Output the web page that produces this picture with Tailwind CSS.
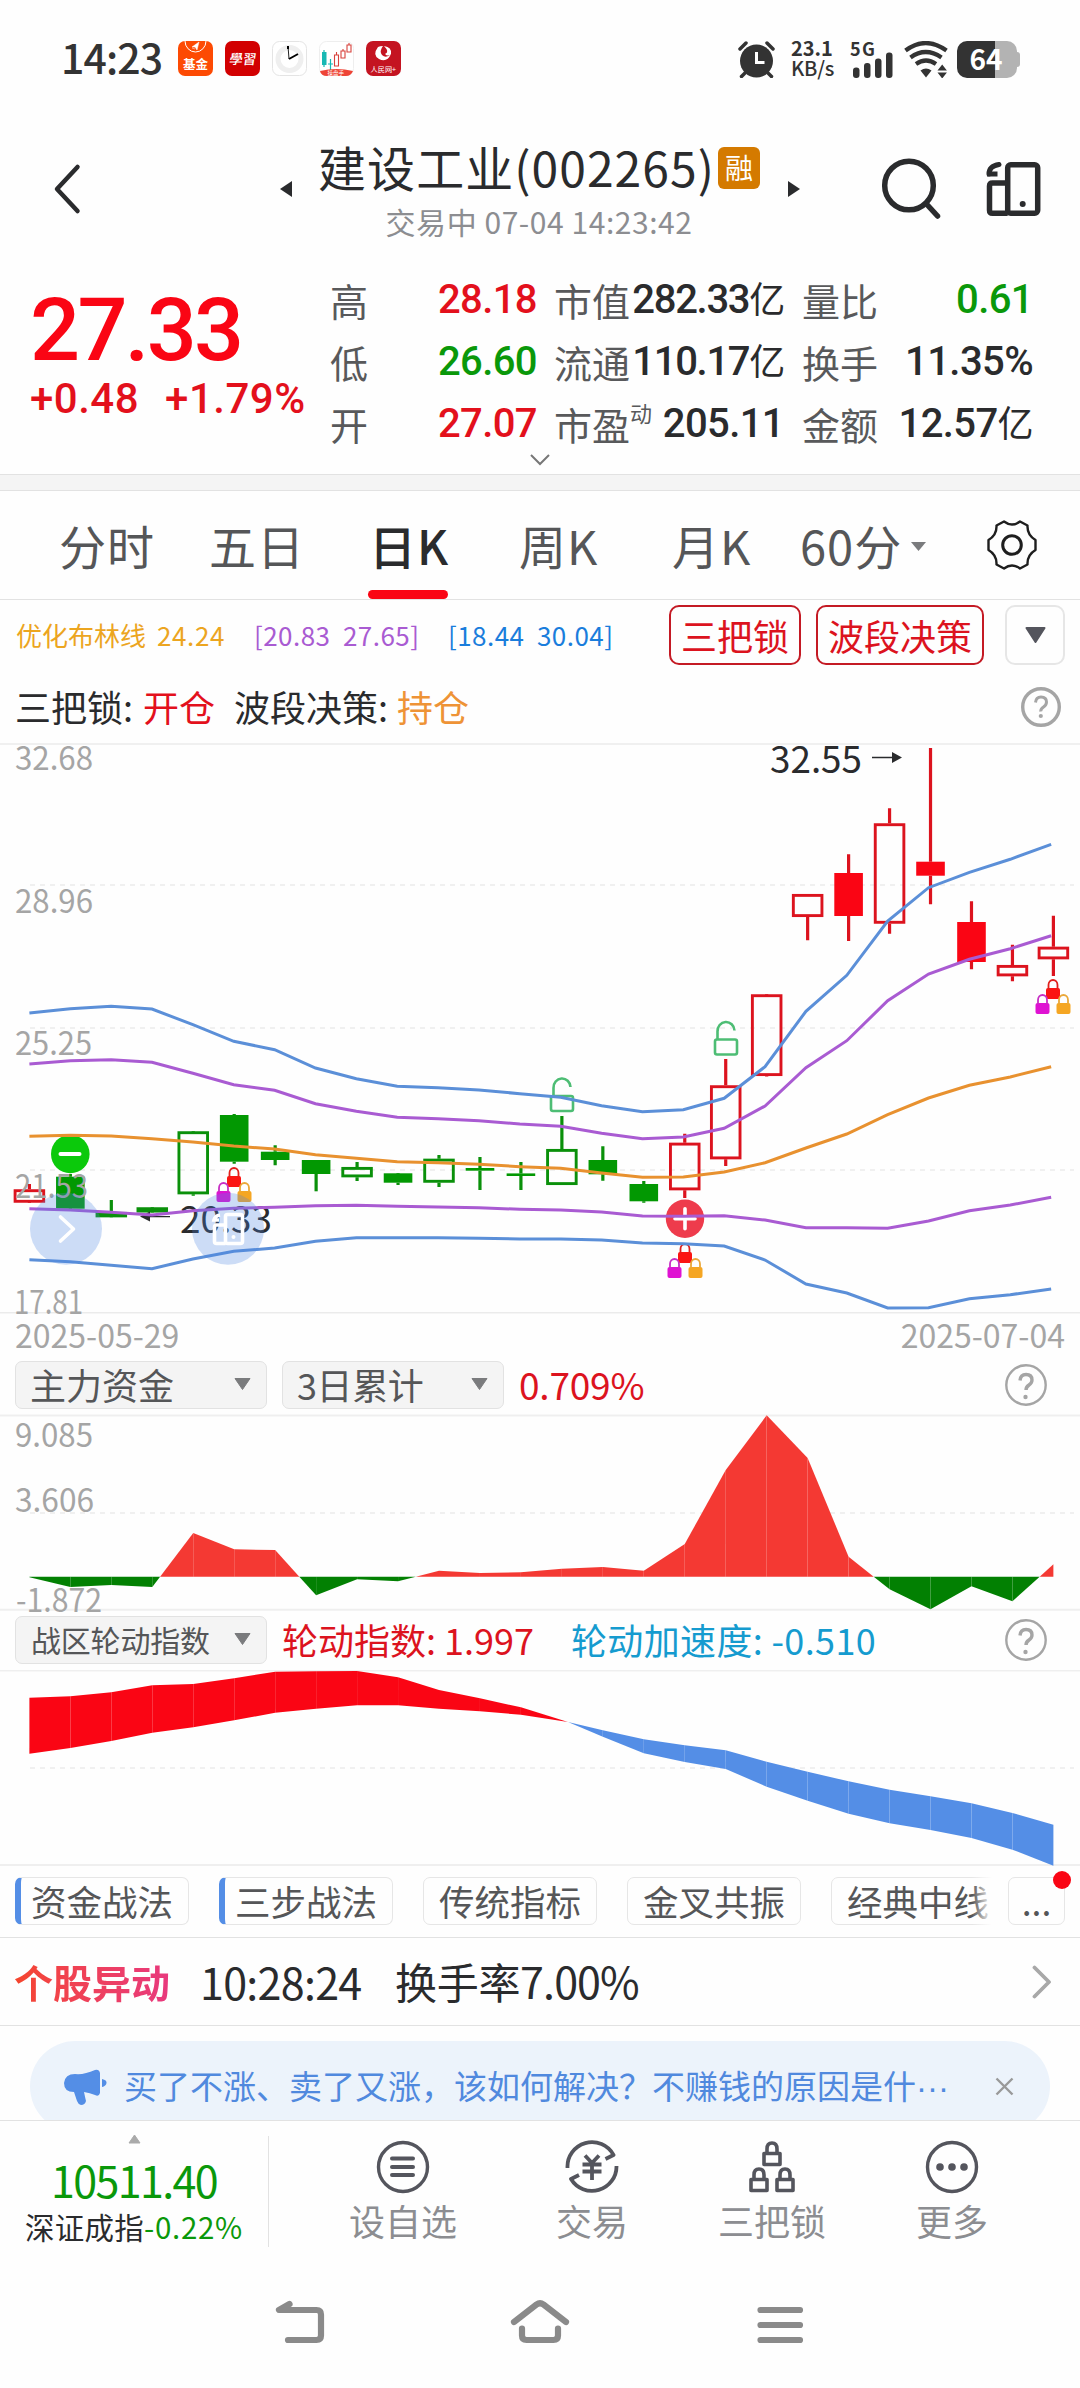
<!DOCTYPE html>
<html lang="zh-CN">
  <head>
    <meta charset="UTF-8" />
    <meta name="viewport" content="width=device-width, initial-scale=1.0" />
    <title>建设工业(002265)</title>
    <script src="https://cdn.jsdelivr.net/npm/@tailwindcss/browser@4"></script>
  </head>

  <body class="w-[1080px] h-[2388px] bg-[#fefefe] overflow-hidden flex flex-col whitespace-nowrap leading-none text-[#2a2b2d] font-['Noto_Sans_CJK_SC',sans-serif]">
    <!-- Status bar -->
    <div class="h-[100px] shrink-0 flex items-start justify-between pl-[61px] pr-[60px] pt-[41px]">
      <div class="flex items-center h-[35px]">
        <span class="w-[117px] text-[41px] font-medium text-[#333] tracking-[-0.900px] leading-[35px] -mt-1">14:23</span>
        <div class="flex gap-[12px]">
          <svg class="w-[35px] h-[35px] rounded-[7px]" viewBox="0 0 35 35">
            <rect width="35" height="35" fill="#fd4a03" />
            <path d="M7 0a10.5 11 0 0 0 21 0" fill="none" stroke="#fff" stroke-width="1" />
            <path d="M14 6l7-5-2 8-2-3zM14 7l3 1" fill="#fff" stroke="#fff" stroke-width=".5" />
            <text x="5" y="27.500" font-size="12.500" font-weight="700" fill="#fff">基金</text>
          </svg>
          <svg class="w-[35px] h-[35px] rounded-[7px]" viewBox="0 0 35 35">
            <rect width="35" height="35" fill="#d20001" />
            <text x="5" y="23" font-size="13.500" font-weight="500" fill="#fff" transform="skewX(-8) translate(2 0)">學習</text>
          </svg>
          <svg class="w-[35px] h-[35px]" viewBox="0 0 35 35">
            <rect x=".5" y=".5" width="34" height="34" rx="7" fill="#fff" stroke="#e4e4e4" />
            <circle cx="17.500" cy="18" r="11.500" fill="none" stroke="#efefef" stroke-width="5" />
            <path d="M17 18l-1-13" stroke="#222" stroke-width="1" />
            <path d="M16 5v3M17 18l9-5" stroke="#000" stroke-width="2" />
          </svg>
          <svg class="w-[35px] h-[35px]" viewBox="0 0 35 35">
            <rect x=".5" y=".5" width="34" height="34" rx="7" fill="#fff" stroke="#eee" />
            <path d="M5 9v17M11.500 18v11M9 23h5" stroke="#17b8b4" stroke-width="1.200" />
            <rect x="3" y="11" width="4.500" height="13" fill="#17b8b4" />
            <path d="M15.500 14h4v11h-4zM22 10h4v7h-4zM28 4h4v7h-4zM17.500 11v3M24 8v2M30 2v2" fill="none" stroke="#d8423c" stroke-width="1.100" />
            <path d="M1 30q16.500-4 33 0q-2 5-7 5H8q-6 0-7-5z" fill="#ee4436" />
            <text x="8.500" y="33.500" font-size="5.500" fill="#fff">操盘手</text>
          </svg>
          <svg class="w-[35px] h-[35px] rounded-[7px]" viewBox="0 0 35 35">
            <rect width="35" height="35" fill="#c41421" />
            <path d="M12 6q-6 8 1 12q8 4 12-5q-5 5-9 1q-3-4 1-9q-3 0-5 1z" fill="#fff" />
            <path d="M18 5q8 1 7 8q-3 3-6 0q5-2-1-8z" fill="#fff" />
            <text x="4.500" y="31" font-size="7.200" fill="#fff">人民网+</text>
          </svg>
        </div>
      </div>
      <div class="flex items-start text-[#333]">
        <svg class="w-[37px] h-[37px]" viewBox="0 0 37 37" fill="none" stroke="#333" stroke-linecap="round">
          <circle cx="18.500" cy="20" r="16.500" fill="#333" stroke="none" />
          <path d="M2 8l6-6M35 8l-6-6" stroke-width="3.500" />
          <path d="M7 32l-3.500 3.500M30 32l3.500 3.500" stroke-width="3.500" />
          <path d="M18.500 11v10.500h8" stroke="#fff" stroke-width="3" stroke-linecap="butt" />
        </svg>
        <div class="ml-[16px] w-[60px] flex flex-col text-[20px] font-bold leading-[20px]">
          <span class="-mt-[3px]">23.1</span>
          <span class="font-medium tracking-[-0.200px]">KB/s</span>
        </div>
        <svg class="w-[44px] h-[37px] overflow-visible" viewBox="0 0 44 37" fill="#333">
          <text x="-1" y="14.500" font-size="18" font-weight="700" textLength="25">5G</text>
          <rect x="2" y="26.500" width="6.500" height="10.500" rx="3" />
          <rect x="13" y="22" width="6.500" height="15" rx="3" />
          <rect x="24" y="17.500" width="6.500" height="19.500" rx="3" />
          <rect x="35" y="11.500" width="6.500" height="25.500" rx="3" />
        </svg>
        <svg class="ml-[9px] w-[44px] h-[37px]" viewBox="0 0 44 37" fill="none" stroke="#333" stroke-width="4.200">
          <path d="M1.500 9.500q20-15 41 0M6.500 16.500q15-11 31 0M12 23q10-7 20 0" />
          <path d="M16.500 29.500q5.500-4 11 0L22 36.500z" fill="#333" stroke="none" />
          <path d="M33.500 29.500l4.700-6 4.700 6zM33.500 31.500l4.700 6 4.700-6z" fill="#333" stroke="none" />
        </svg>
        <svg class="ml-[9px] w-[63px] h-[37px] overflow-visible" viewBox="0 0 63 37">
          <rect x="50" y="11" width="13" height="15" rx="3" fill="#b3b3b3" />
          <path d="M38 0h12a10 10 0 0 1 10 10v17a10 10 0 0 1-10 10H38z" fill="#b3b3b3" />
          <path d="M38 0H10A10 10 0 0 0 0 10v17a10 10 0 0 0 10 10h28z" fill="#333" />
          <text x="12.500" y="28.500" font-size="28" font-weight="700" fill="#fff" textLength="33">64</text>
        </svg>
      </div>
    </div>

    <!-- Title bar -->
    <header class="h-[150px] shrink-0 flex items-start pl-[53px] pr-[38px]">
      <svg class="mt-[62px] w-[30px] h-[54px]" viewBox="0 0 30 54">
        <path d="M24.500 5L4 27l20.500 22" fill="none" stroke="#2a2b2d" stroke-width="4.500" stroke-linecap="round" stroke-linejoin="round" />
      </svg>
      <svg class="mt-[81px] ml-[197px] w-[12px] h-[16px]" viewBox="0 0 12 16"><path d="M0 8L12 0v16z" fill="#2a2b2d" /></svg>
      <div class="ml-[25px] w-[444px] flex flex-col items-center">
        <div class="flex items-start">
          <h1 class="mt-[40px] text-[48px] leading-[52px] tracking-[1.050px]">建设工业(002265)</h1>
          <span class="mt-[47px] ml-[3px] w-[42px] h-[42px] rounded-[6px] bg-[#d47a00] text-white text-[28px] leading-[41px] text-center">融</span>
        </div>
        <p class="mt-[13px] text-[30px] leading-[32px] text-[#8c8d91] tracking-[0.550px]">交易中 07-04 14:23:42</p>
      </div>
      <svg class="mt-[81px] ml-[27px] w-[12px] h-[16px]" viewBox="0 0 12 16"><path d="M12 8L0 0v16z" fill="#2a2b2d" /></svg>
      <svg class="mt-[58px] ml-[81px] w-[62px] h-[62px]" viewBox="0 0 62 62" fill="none" stroke="#2a2b2d" stroke-width="5.500" stroke-linecap="round">
        <circle cx="28" cy="27.500" r="24.300" />
        <path d="M45.500 46l11 12" />
      </svg>
      <svg class="mt-[62px] ml-[43px] w-[56px] h-[54px]" viewBox="0 0 56 54" fill="none" stroke="#2a2b2d" stroke-width="5.500">
        <rect x="21.700" y="2.800" width="30" height="48.400" rx="3" />
        <path d="M21.700 21H6.500q-3 0-3 3v24.200q0 3 3 3h15.200" />
        <circle cx="36.700" cy="42" r="3" fill="#2a2b2d" stroke="none" />
        <path d="M13 2.500Q3 4 3 12" stroke-linecap="round" stroke-width="5" />
        <path d="M1 9.500h10.500v5H1z" fill="#2a2b2d" stroke="none" />
      </svg>
    </header>

    <!-- Quote -->
    <section class="relative h-[224px] shrink-0 flex pt-[19px] font-['Roboto','Noto_Sans_CJK_SC',sans-serif]">
      <div class="w-[330px] pl-[30px] text-[#e3101c]">
        <div class="mt-[20px] text-[88px] leading-[82px] font-medium tracking-[-2.600px] text-[#fa0514]">27.33</div>
        <div class="mt-[4px] flex gap-[26px] text-[42px] leading-[48px] font-medium tracking-[0.500px]">
          <span>+0.48</span>
          <span>+1.79%</span>
        </div>
      </div>
      <div class="w-[207px] text-[40px] leading-[62px] text-[#e3101c]">
        <div class="h-[62px] flex justify-between"><span class="mt-[3px] text-[38px] text-[#58595b]">高</span><span class="font-medium tracking-[-0.600px]">28.18</span></div>
        <div class="h-[62px] flex justify-between"><span class="mt-[3px] text-[38px] text-[#58595b]">低</span><span class="font-medium tracking-[-0.600px] text-[#0a980a]">26.60</span></div>
        <div class="h-[62px] flex justify-between"><span class="mt-[3px] text-[38px] text-[#58595b]">开</span><span class="font-medium tracking-[-0.600px]">27.07</span></div>
      </div>
      <div class="ml-[17px] w-[230px] text-[40px] leading-[62px]">
        <div class="h-[62px] flex justify-between"><span class="mt-[3px] text-[38px] text-[#58595b]">市值</span><span class="font-medium tracking-[-1.300px]">282.33<span class="text-[36px] font-normal">亿</span></span></div>
        <div class="h-[62px] flex justify-between"><span class="mt-[3px] text-[38px] text-[#58595b]">流通</span><span class="font-medium tracking-[-1.300px]">110.17<span class="text-[36px] font-normal">亿</span></span></div>
        <div class="h-[62px] flex justify-between"><span class="mt-[3px] flex text-[38px] text-[#58595b]">市盈<span class="text-[22px] leading-[38px]">动</span></span><span class="font-medium tracking-[-0.600px]">205.11</span></div>
      </div>
      <div class="ml-[18px] w-[231px] text-[40px] leading-[62px]">
        <div class="h-[62px] flex justify-between"><span class="mt-[3px] text-[38px] text-[#58595b]">量比</span><span class="font-medium tracking-[-0.600px] text-[#0a980a]">0.61</span></div>
        <div class="h-[62px] flex justify-between"><span class="mt-[3px] text-[38px] text-[#58595b]">换手</span><span class="font-medium tracking-[-0.600px]">11.35%</span></div>
        <div class="h-[62px] flex justify-between"><span class="mt-[3px] text-[38px] text-[#58595b]">金额</span><span class="font-medium tracking-[-0.600px]">12.57<span class="text-[36px] font-normal">亿</span></span></div>
      </div>
      <svg class="absolute left-[529px] top-[203px] w-[22px] h-[14px]" viewBox="0 0 22 14">
        <path d="M2 2l9 9 9-9" fill="none" stroke="#777" stroke-width="2" />
      </svg>
    </section>

    <div class="h-[17px] shrink-0 bg-[#f4f4f4] border-y border-[#e2e2e2]"></div>

    <!-- Period tabs -->
    <nav class="relative h-[109px] shrink-0 flex items-start pt-[28px] pl-[59px] border-b border-[#e2e2e2] text-[47px] leading-[52px] tracking-[1px] text-[#555658]">
      <span class="w-[150px]">分时</span>
      <span class="w-[160px]">五日</span>
      <span class="w-[150px] text-[#2a2b2d] font-medium">日K</span>
      <span class="w-[153px]">周K</span>
      <span class="w-[128px]">月K</span>
      <span class="w-[111px]">60分</span>
      <svg class="mt-[23px] w-[15px] h-[9px]" viewBox="0 0 15 9"><path d="M0 0h15L7.500 9z" fill="#7a7b7d" /></svg>
      <svg class="ml-[60px] w-[52px] h-[52px]" viewBox="-26 -26 52 52" fill="none" stroke="#1e1e1e" stroke-width="2.400" stroke-linejoin="round">
        <circle r="9.300" stroke-width="3" />
        <path d="M-8-23.500Q0-17.500 8-23.500L15.500-19.500Q15-10 23.500-5V5Q15 10 15.500 19.500L8 23.500Q0 17.500-8 23.500L-15.500 19.500Q-15 10-23.500 5V-5Q-15-10-15.500-19.500Z" />
      </svg>
      <span class="absolute left-[368px] bottom-0 w-[80px] h-[9px] rounded-full bg-[#fa0514]"></span>
    </nav>

    <!-- Indicator values -->
    <section class="h-[143px] shrink-0">
      <div class="flex items-start pt-[5px] pl-[16px] text-[26px]">
        <div class="w-[653px] flex pt-[15px] leading-[30px]">
          <span class="w-[141px] text-[#eca51f]">优化布林线</span>
          <span class="w-[97px] text-[#eca51f] tracking-[0.600px]">24.24</span>
          <span class="w-[194px] text-[#a95bd2] tracking-[0.450px]">[20.83&nbsp; 27.65]</span>
          <span class="text-[#1a7ddc] tracking-[0.450px]">[18.44&nbsp; 30.04]</span>
        </div>
        <button class="w-[132px] h-[60px] rounded-[10px] border-2 border-[#c41a24] text-[#dc131e] text-[36px] leading-[52px]">三把锁</button>
        <button class="ml-[15px] w-[168px] h-[60px] rounded-[10px] border-2 border-[#c41a24] text-[#dc131e] text-[36px] leading-[52px]">波段决策</button>
        <button class="ml-[21px] w-[60px] h-[60px] rounded-[10px] border-2 border-[#e6e6e6] flex items-center justify-center">
          <svg class="w-[21px] h-[16px]" viewBox="0 0 21 16"><path d="M1.500 1h18L10.500 15z" fill="#54555d" stroke="#54555d" stroke-width="2" stroke-linejoin="round" /></svg>
        </button>
      </div>
      <div class="flex items-center pl-[15px] pr-[19px] mt-[20px] text-[36px] leading-[40px]">
        <span class="w-[128px]">三把锁:</span>
        <span class="w-[91px] text-[#e3101c]">开仓</span>
        <span class="w-[163px]">波段决策:</span>
        <span class="text-[#ee9336]">持仓</span>
        <svg class="ml-auto mt-[2px] w-[40px] h-[40px]" viewBox="0 0 40 40" fill="none" stroke="#a5a5a5">
          <circle cx="20" cy="20" r="18.300" stroke-width="3.400" />
          <path d="M14.500 15.500q.5-5.500 5.500-5.500 5.500 0 5.500 5 0 3-3 5t-2.700 4.500" stroke-width="3" />
          <circle cx="19.800" cy="29" r="2.100" fill="#a5a5a5" stroke="none" />
        </svg>
      </div>
    </section>

    <!-- Daily K chart -->
    <svg class="shrink-0 w-[1080px] h-[571px] overflow-visible" viewBox="0 743 1080 571">
      <defs>
        <g id="lock">
          <rect x="-7" y="0" width="14" height="11" rx="2" stroke="none" />
          <path d="M-4.500 1v-4a4.500 5 0 0 1 9 0v4" fill="none" stroke-width="1.800" />
        </g>
        <g id="trio">
          <use href="#lock" fill="#fb1512" stroke="#e0201c" />
          <use href="#lock" x="-10.500" y="15" fill="#df12d2" stroke="#c72fc4" />
          <use href="#lock" x="10.500" y="15" fill="#f5a623" stroke="#eaa83a" />
        </g>
        <g id="unlock" fill="none" stroke="#4dbd74" stroke-width="2.600">
          <rect x="-11" y="0" width="22" height="15" rx="2" />
          <path d="M-8.500 0v-8a8.500 9 0 0 1 17-1" />
        </g>
      </defs>
      <path d="M0 744h1080M0 1312.700h1080" stroke="#ebebeb" stroke-width="1.500" />
      <path d="M30 885h1044M30 1028h1044M30 1170h1044" stroke="#ececec" stroke-width="1.500" stroke-dasharray="5 5" />
      <g id="candles"></g>
      <g font-size="37" fill="#2a2b2d">
        <text x="770" y="772.500" textLength="92" lengthAdjust="spacingAndGlyphs">32.55</text>
        <text x="180" y="1232.500" textLength="92" lengthAdjust="spacingAndGlyphs">20.33</text>
      </g>
      <path d="M872 757.500h22M170 1216.700h-25" stroke="#2a2b2d" stroke-width="1.300" />
      <path d="M892 752l10 5.500-10 5.500zM150 1211.500l-10 5 10 5z" fill="#2a2b2d" />
      <circle cx="70.300" cy="1154" r="19.300" fill="#0bc90b" />
      <path d="M60.500 1154h19" stroke="#fff" stroke-width="4" stroke-linecap="round" />
      <circle cx="685" cy="1218.700" r="19.200" fill="#ee3b4c" />
      <path d="M675 1218.700h20M685 1208.700v20" stroke="#fff" stroke-width="3.600" stroke-linecap="round" />
      <use href="#unlock" x="562" y="1096" />
      <use href="#unlock" x="726" y="1039.500" />
      <use href="#trio" x="234" y="1176" />
      <use href="#trio" x="685" y="1252" />
      <use href="#trio" x="1053" y="988" />
      <g id="bands" fill="none" stroke-width="3"></g>
      <g font-size="32" fill="#a5a5a5">
        <text x="15" y="770" textLength="78" lengthAdjust="spacingAndGlyphs">32.68</text>
        <text x="15" y="912.500" textLength="78" lengthAdjust="spacingAndGlyphs">28.96</text>
        <text x="15" y="1054.500" textLength="77" lengthAdjust="spacingAndGlyphs">25.25</text>
        <text x="15" y="1197.500" textLength="73" lengthAdjust="spacingAndGlyphs">21.53</text>
        <text x="14" y="1314" textLength="69" lengthAdjust="spacingAndGlyphs">17.81</text>
      </g>
      <!-- Floating buttons -->
      <g fill="#4a86e4" fill-opacity=".28">
        <circle cx="66" cy="1228.700" r="36" />
        <circle cx="228" cy="1228.700" r="36" />
      </g>
      <g fill="none" stroke="#fff" stroke-width="3.600">
        <path d="M60.500 1217l13 12-13 12" stroke-linecap="round" stroke-linejoin="round" />
        <rect x="225.500" y="1214.500" width="17" height="29" rx="2" />
        <path d="M225.500 1225h-9q-2 0-2 2v14.500q0 2 2 2h9M220 1215q-5 1-6 5h5" />
        <circle cx="233.500" cy="1237" r="2" fill="#fff" stroke="none" />
      </g>
    </svg>
    <div class="h-[47px] shrink-0 flex justify-between pl-[15px] pr-[15px] pt-[3px] text-[32px] leading-[34px] text-[#a5a5a5]">
      <span>2025-05-29</span>
      <span>2025-07-04</span>
    </div>

    <!-- Main capital -->
    <div class="h-[54px] shrink-0 flex items-start pl-[15px] pr-[33px] text-[36px] text-[#555658]">
      <button class="w-[252px] h-[48px] pl-[14px] pr-[15px] rounded-[7px] border border-[#e2e2e2] bg-[#f4f4f4] flex items-center justify-between">
        <span class="leading-[46px] -mt-[2px]">主力资金</span>
        <svg class="w-[17px] h-[12px] -mt-[2px]" viewBox="0 0 17 12"><path d="M1 .5h15L8.500 11.500z" fill="#7a7b7d" stroke="#7a7b7d" stroke-linejoin="round" /></svg>
      </button>
      <button class="ml-[15px] w-[222px] h-[48px] pl-[14px] pr-[15px] rounded-[7px] border border-[#e2e2e2] bg-[#f4f4f4] flex items-center justify-between">
        <span class="leading-[46px] tracking-[-0.400px] -mt-[2px]">3日累计</span>
        <svg class="w-[17px] h-[12px] -mt-[2px]" viewBox="0 0 17 12"><path d="M1 .5h15L8.500 11.500z" fill="#7a7b7d" stroke="#7a7b7d" stroke-linejoin="round" /></svg>
      </button>
      <span class="ml-[15px] leading-[46px] text-[37px] tracking-[-0.200px] text-[#dc131e]">0.709%</span>
      <svg class="ml-auto mt-[3px] w-[42px] h-[42px]" viewBox="0 0 42 42" fill="none" stroke="#a5a5a5">
        <circle cx="21" cy="21" r="19.700" stroke-width="2.400" />
        <path d="M15 16.500q.5-6 6-6 6 0 6 5.500 0 3-3 5t-3 5" stroke-width="3.400" />
        <circle cx="20.500" cy="33" r="2.200" fill="#a5a5a5" stroke="none" />
      </svg>
    </div>
    <svg class="shrink-0 w-[1080px] h-[197px] overflow-visible" viewBox="0 1415 1080 197">
      <path d="M0 1415.500h1080M0 1609.700h1080" stroke="#efefef" stroke-width="2" />
      <path d="M30 1513h1044" stroke="#ececec" stroke-width="1.500" stroke-dasharray="5 5" />
      <g id="capital"></g>
      <g font-size="32" fill="#a5a5a5">
        <text x="15" y="1446.500" textLength="78" lengthAdjust="spacingAndGlyphs">9.085</text>
        <text x="15" y="1511.500" textLength="79" lengthAdjust="spacingAndGlyphs">3.606</text>
        <text x="16" y="1611.500" textLength="86" lengthAdjust="spacingAndGlyphs">-1.872</text>
      </g>
    </svg>

    <!-- Rotation index -->
    <div class="h-[58px] shrink-0 flex items-start pt-[4px] pl-[15px] pr-[33px] text-[36px] text-[#dc131e]">
      <button class="w-[252px] h-[48px] px-[15px] rounded-[7px] border border-[#e2e2e2] bg-[#f4f4f4] text-[#555658] flex items-center justify-between">
        <span class="text-[30px] leading-[46px] tracking-[-0.200px] -mt-[3px]">战区轮动指数</span>
        <svg class="w-[17px] h-[12px] -mt-[2px]" viewBox="0 0 17 12"><path d="M1 .5h15L8.500 11.500z" fill="#7a7b7d" stroke="#7a7b7d" stroke-linejoin="round" /></svg>
      </button>
      <span class="ml-[15px] w-[289px] leading-[46px]">轮动指数: 1.997</span>
      <span class="leading-[46px] tracking-[0.350px] text-[#159bcf]">轮动加速度: -0.510</span>
      <svg class="ml-auto mt-[3px] w-[42px] h-[42px]" viewBox="0 0 42 42" fill="none" stroke="#a5a5a5">
        <circle cx="21" cy="21" r="19.700" stroke-width="2.400" />
        <path d="M15 16.500q.5-6 6-6 6 0 6 5.500 0 3-3 5t-3 5" stroke-width="3.400" />
        <circle cx="20.500" cy="33" r="2.200" fill="#a5a5a5" stroke="none" />
      </svg>
    </div>
    <svg class="shrink-0 w-[1080px] h-[197px]" viewBox="0 1670 1080 197">
      <path d="M0 1670.500h1080M0 1865h1080" stroke="#efefef" stroke-width="2" />
      <path d="M30 1768h1044" stroke="#ececec" stroke-width="1.500" stroke-dasharray="5 5" />
      <g id="ribbon"></g>
    </svg>

    <!-- Strategy chips -->
    <div class="h-[71px] shrink-0 flex pt-[10px] pl-[15px] border-b border-[#e2e2e2] text-[35.500px] text-[#555658]">
      <div class="relative w-[977px] h-[50px] flex gap-[30px] overflow-hidden">
        <span class="shrink-0 w-[174px] h-[48px] pl-[10px] rounded-[7px] border border-l-[6px] border-[#e6e6e6] border-l-[#548ee6] leading-[45px]">资金战法</span>
        <span class="shrink-0 w-[174px] h-[48px] pl-[10px] rounded-[7px] border border-l-[6px] border-[#e6e6e6] border-l-[#548ee6] leading-[45px]">三步战法</span>
        <span class="shrink-0 w-[174px] h-[48px] pl-[15px] rounded-[7px] border border-[#e6e6e6] leading-[45px]">传统指标</span>
        <span class="shrink-0 w-[174px] h-[48px] pl-[15px] rounded-[7px] border border-[#e6e6e6] leading-[45px]">金叉共振</span>
        <span class="shrink-0 w-[174px] h-[48px] pl-[15px] rounded-[7px] border border-[#e6e6e6] leading-[45px]">经典中线</span>
        <span class="absolute right-0 top-0 w-[20px] h-[50px] bg-gradient-to-r from-white/0 to-[#fefefe]"></span>
      </div>
      <span class="relative ml-[16px] w-[57px] h-[48px] rounded-[7px] border border-[#e6e6e6] text-center leading-[45px]">...
        <i class="absolute -right-[7px] -top-[7px] w-[18px] h-[18px] rounded-full bg-[#fa0514]"></i>
      </span>
    </div>

    <!-- Stock movement -->
    <div class="h-[88px] shrink-0 flex items-center pl-[14px] pr-[28px] border-b border-[#e2e2e2] text-[42px]">
      <span class="w-[186px] text-[39px] leading-[50px] font-bold bg-gradient-to-r from-[#f5452b] from-0% to-[#e8387e] to-85% bg-clip-text text-transparent -mt-[2px]">个股异动</span>
      <span class="w-[195px] text-[43px] leading-[50px] tracking-[-0.700px] -mt-[2px]">10:28:24</span>
      <span class="leading-[50px] tracking-[-0.300px] -mt-[2px]">换手率<span class="text-[43px] tracking-[-0.900px]">7.00%</span></span>
      <svg class="ml-auto w-[20px] h-[34px]" viewBox="0 0 20 34"><path d="M2.500 2.500L17 17 2.500 31.500" fill="none" stroke="#a8a8a8" stroke-width="3.800" stroke-linecap="round" stroke-linejoin="round" /></svg>
    </div>

    <!-- Notice -->
    <div class="h-[94px] shrink-0 overflow-hidden px-[30px] pt-[15px]">
      <div class="h-[91px] rounded-full bg-[#ecf3fb] flex items-center pl-[34px] pr-[36px] text-[33px] text-[#5089de]">
        <svg class="shrink-0 w-[43px] h-[36px]" viewBox="0 0 43 36" fill="#548ee6">
          <path d="M11 5q9 1 20-4 4-1 5 3v20q-1 4-5 2-5-2-11-3 1 5 2 9-1 4-5 4-3-1-4-4l-3-9Q0 23 0 14 1 5 11 5z" />
          <path d="M38 10q5 1 4.500 4T38 18z" />
        </svg>
        <span class="ml-[17px] leading-[40px]">买了不涨、卖了又涨，该如何解决？不赚钱的原因是什<span class="font-['Liberation_Sans',sans-serif]">···</span></span>
        <svg class="shrink-0 ml-auto w-[19px] h-[19px]" viewBox="0 0 19 19"><path d="M1.500 1.500l16 16M17.500 1.500l-16 16" stroke="#999" stroke-width="2.400" /></svg>
      </div>
    </div>

    <!-- Bottom toolbar -->
    <footer class="h-[140px] shrink-0 flex border-t border-[#e2e2e2] text-[#8c8d91]">
      <div class="w-[268px] flex flex-col items-center">
        <svg class="mt-[13px] w-[13px] h-[10px]" viewBox="0 0 13 10"><path d="M6.500 1L12 9H1z" fill="#aaa" stroke="#aaa" stroke-linejoin="round" /></svg>
        <span class="mt-[13px] text-[43px] leading-[44px] tracking-[-1.600px] text-[#0a980a]">10511.40</span>
        <span class="mt-[9px] text-[29.500px] leading-[32px] tracking-[0.250px] text-[#2a2b2d]">深证成指<span class="text-[#0a980a] tracking-[0.700px]">-0.22%</span></span>
      </div>
      <div class="mt-[15px] w-px h-[111px] bg-[#e2e2e2]"></div>
      <div class="flex-1 flex pl-[80px] text-[36px] leading-[40px] pt-[19px]">
        <div class="flex flex-col items-center gap-[6px]">
          <svg class="w-[54px] h-[54px]" viewBox="-27 -27 54 54" fill="none" stroke="#54555d" stroke-width="3.400" stroke-linecap="round">
            <circle r="24.500" />
            <path d="M-11-8.500h21M-11 0h21M-11 8h21" stroke-width="4" />
          </svg>
          <span>设自选</span>
        </div>
        <div class="ml-[99px] flex flex-col items-center gap-[6px]">
          <svg class="w-[54px] h-[54px]" viewBox="-27 -27 54 54" fill="none" stroke="#54555d" stroke-width="3.800" stroke-linecap="butt">
            <path d="M-24.500 1A24.500 24.500 0 0 1 21.500-12l-8 4" stroke-linejoin="round" />
            <path d="M24.500-1A24.500 24.500 0 0 1-21 12l8-4" stroke-linejoin="round" />
            <path d="M-7-11.500L0-4 7-11.500M0-4v17M-9.500-2.500h19M-9.500 4.500h19" />
          </svg>
          <span>交易</span>
        </div>
        <div class="ml-[90px] flex flex-col items-center gap-[6px]">
          <svg class="w-[54px] h-[54px]" viewBox="0 0 54 54" fill="none" stroke="#54555d" stroke-width="3.600" stroke-linejoin="round">
            <path d="M19 13.500h16v11H19zM22 13V9q0-6 5-6t5 6v4" />
            <path d="M6 39.500h16v11H6zM9 39v-4q0-6 5-6t5 6v4" />
            <path d="M32 39.500h16v11H32zM35 39v-4q0-6 5-6t5 6v4" />
          </svg>
          <span>三把锁</span>
        </div>
        <div class="ml-[90px] flex flex-col items-center gap-[6px]">
          <svg class="w-[54px] h-[54px]" viewBox="-27 -27 54 54" fill="#54555d">
            <circle r="24.500" fill="none" stroke="#54555d" stroke-width="3.400" />
            <circle cx="-12" r="3.800" /><circle r="3.800" /><circle cx="12" r="3.800" />
          </svg>
          <span>更多</span>
        </div>
      </div>
    </footer>

    <!-- System navigation -->
    <div class="flex-1 flex items-start pt-[39px] pl-[273px]">
      <svg class="w-[54px] h-[46px]" viewBox="273 2299 54 46" fill="none" stroke="#8a8a8a" stroke-width="6.200" stroke-linecap="round" stroke-linejoin="round">
        <path d="M289.500 2304L279 2310h37.500q4.500 0 4.500 4.500v21q0 4.500-4.500 4.500H288" />
      </svg>
      <svg class="ml-[181px] w-[64px] h-[46px]" viewBox="508 2299 64 46" fill="none" stroke="#8a8a8a" stroke-width="6.200" stroke-linecap="round" stroke-linejoin="round">
        <path d="M514 2322l22.500-17.500q3.500-2.500 7 0L566 2322" />
        <path d="M522 2328.500v7q0 4.500 4.500 4.500h27q4.500 0 4.500-4.500v-7" />
      </svg>
      <svg class="ml-[182px] w-[52px] h-[46px]" viewBox="754 2299 52 46" stroke="#8a8a8a" stroke-width="6.200" stroke-linecap="round">
        <path d="M760.500 2310h39.500M760.500 2325h39.500M760.500 2340h39.500" />
      </svg>
    </div>

    <script>
      const X0 = 29.4;
      const STEP = 40.96;
      const RED = "#dc131e";
      const GREEN = "#0a900a";

      // [color, filled, body top, body bottom, high, low]
      const candles = [
        ["r", 0, 1189.3, 1202.7, 1184, 1202],
        ["g", 1, 1176.7, 1208.7, 1174, 1208],
        ["g", 0, 1212, 1217.3, 1200, 1216],
        ["g", 0, 1207.3, 1212.5, 1208, 1212],
        ["g", 0, 1131.3, 1194.3, 1132, 1195.7],
        ["g", 1, 1115, 1161.7, 1114, 1163.7],
        ["g", 1, 1151.7, 1160, 1145.3, 1165.3],
        ["g", 1, 1160, 1174, 1160, 1191.3],
        ["g", 0, 1167, 1177.3, 1162, 1181],
        ["g", 1, 1173.3, 1182.7, 1174, 1185],
        ["g", 0, 1158.7, 1182.7, 1155, 1187],
        ["g", 1, 1168, 1170.7, 1157, 1190],
        ["g", 1, 1173.4, 1176, 1162, 1190],
        ["g", 0, 1149, 1185, 1116, 1184],
        ["g", 1, 1160, 1174.3, 1146.3, 1180.7],
        ["g", 1, 1184, 1201.3, 1181, 1202.7],
        ["r", 0, 1142.7, 1190.3, 1133.7, 1198],
        ["r", 0, 1085.3, 1159.3, 1059, 1166],
        ["r", 0, 994.3, 1076, 995, 1076.5],
        ["r", 0, 894, 917, 895, 940.3],
        ["r", 1, 873, 916, 854.3, 941],
        ["r", 0, 823.3, 923.7, 808.3, 933.7],
        ["r", 1, 861.7, 875.7, 748, 904.3],
        ["r", 1, 922, 962, 901.3, 969.3],
        ["r", 0, 965, 976.3, 944.7, 981.3],
        ["r", 0, 946.7, 959.3, 915.7, 976],
      ];

      let out = "";
      candles.forEach(([c, filled, top, bottom, high, low], i) => {
        const x = X0 + i * STEP;
        const stroke = c === "r" ? RED : GREEN;
        const fill = c === "r" ? "#fa0514" : "#029802";
        out += `<path d="M${x} ${high}V${top}M${x} ${bottom}V${low}" stroke="${stroke}" stroke-width="3.200"/>`;
        if (filled) {
          out += `<rect x="${x - 14.3}" y="${top}" width="28.600" height="${bottom - top}" fill="${fill}"/>`;
        } else {
          out += `<rect x="${x - 14.3}" y="${top + 1.4}" width="28.600" height="${bottom - top - 2.8}" fill="none" stroke="${stroke}" stroke-width="2.900"/>`;
        }
      });
      document.getElementById("candles").innerHTML = out;

      const bands = [
        ["#5b8fd8", [1013, 1008.7, 1006.3, 1009, 1024.7, 1041.3, 1049.7, 1068, 1078.7, 1086.3, 1087.7, 1090, 1093.7, 1097.3, 1105.7, 1111.7, 1109.7, 1098.3, 1066.7, 1011.3, 975.3, 921, 887.7, 872.3, 859.3, 844.3]],
        ["#a95bd2", [1064, 1060.7, 1059.7, 1062.3, 1073.3, 1084.7, 1090.3, 1103.7, 1111.3, 1117.3, 1118.7, 1120.7, 1124, 1126.3, 1133.3, 1138.7, 1137, 1128.3, 1106, 1067.7, 1040.7, 1000.7, 974, 959.3, 948.7, 935.7]],
        ["#e8912f", [1136.3, 1135.3, 1136, 1138.7, 1142, 1146, 1149, 1154.7, 1158.3, 1161.7, 1162.7, 1164.3, 1166.7, 1168.3, 1173, 1177.3, 1177, 1172, 1162.7, 1148, 1134, 1114.7, 1098, 1085.3, 1077, 1066.7]],
        ["#a95bd2", [1208.7, 1210, 1212.3, 1215, 1210.7, 1208.3, 1207.3, 1205.7, 1205.3, 1206.3, 1207, 1207.7, 1209.3, 1210, 1212, 1216, 1216.3, 1215.7, 1220, 1227.7, 1227.7, 1228.3, 1221, 1210.7, 1205, 1197.3]],
        ["#5b8fd8", [1259.7, 1261.7, 1265.3, 1268.7, 1259, 1251.3, 1248, 1241.3, 1237.7, 1237.7, 1237.7, 1238.3, 1239, 1239, 1240, 1243, 1243.7, 1246, 1260, 1284, 1293, 1308, 1307.7, 1298.7, 1294.7, 1289]],
      ];
      document.getElementById("bands").innerHTML = bands
        .map(([color, ys]) => `<polyline stroke="${color}" points="${ys.map((y, i) => `${X0 + i * 40.87},${y}`).join(" ")}"/>`)
        .join("");

      // Capital flow, split where it crosses the zero line
      const ZERO = 1576.7;
      const flow = [1577.3, 1587, 1585, 1587, 1533, 1549.3, 1550, 1595.3, 1579.3, 1581.3, 1570.7, 1573, 1572.3, 1568.7, 1567, 1570.7, 1544, 1470, 1415.3, 1458, 1556.7, 1589.3, 1609.3, 1586.3, 1601.3, 1564.3];
      out = "";
      for (let i = 0; i < flow.length - 1; i++) {
        const a = flow[i];
        const b = flow[i + 1];
        const xa = X0 + i * STEP;
        const xb = xa + STEP;
        const fill = (y) => (y < ZERO ? "#f43933" : "#028002");
        if ((a - ZERO) * (b - ZERO) < 0) {
          const xc = xa + (STEP * (a - ZERO)) / (a - b);
          out += `<path d="M${xa} ${ZERO}V${a}L${xc} ${ZERO}z" fill="${fill(a)}"/>`;
          out += `<path d="M${xc} ${ZERO}L${xb} ${b}V${ZERO}z" fill="${fill(b)}"/>`;
        } else {
          out += `<path d="M${xa} ${ZERO}V${a}L${xb} ${b}V${ZERO}z" fill="${fill(a)}"/>`;
        }
      }
      document.getElementById("capital").innerHTML = out;

      // Ribbon points: [x, upper, lower]
      const red = [[1697.7, 1753.7], [1696.3, 1748], [1692.3, 1741], [1685.3, 1732.7], [1684, 1727.3], [1678.3, 1720.3], [1671.7, 1712.7], [1671.3, 1708.7], [1671, 1705.3], [1677.3, 1705.3], [1690, 1708.7], [1698.3, 1711.3], [1707.3, 1714.7]]
        .map(([t, b], i) => [X0 + i * STEP, t, b]);
      const blue = [[1730.3, 1736.7], [1739.3, 1753.3], [1745.3, 1762], [1750.3, 1769], [1761.7, 1786.7], [1771.7, 1800.7], [1781.3, 1813.7], [1789.7, 1823.3], [1796.3, 1830], [1803.3, 1838], [1813, 1849.7], [1824.7, 1865.7]]
        .map(([t, b], i) => [X0 + (i + 14) * STEP, t, b]);
      const cross = [568, 1722, 1722];
      red.push(cross);
      blue.unshift(cross);
      const ribbon = (pts, fill) =>
        pts.slice(1).map((p, i) => {
          const q = pts[i];
          return `<path d="M${q[0]} ${q[1]}L${p[0]} ${p[1]}V${p[2]}L${q[0]} ${q[2]}z" fill="${fill}"/>`;
        }).join("");
      document.getElementById("ribbon").innerHTML = ribbon(red, "#fa0514") + ribbon(blue, "#548ee6");
    </script>
  </body>
</html>
